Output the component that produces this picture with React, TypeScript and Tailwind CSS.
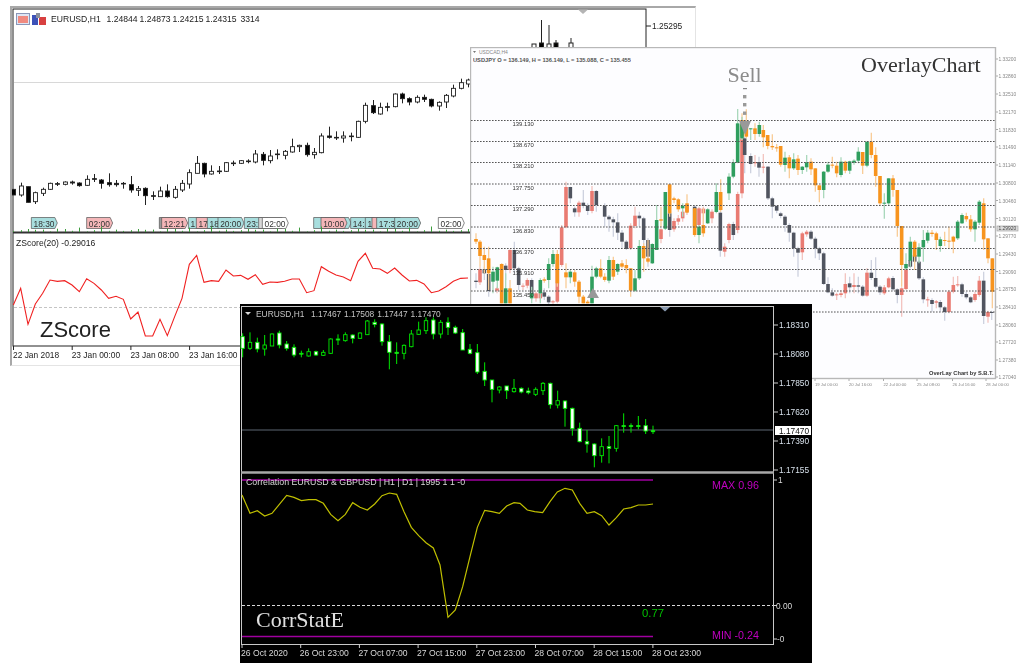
import React from "react";

type Tag = [number, string, string];

const sans = "font-['Liberation_Sans',Arial,sans-serif]";
const serif = "font-['Liberation_Serif','Times_New_Roman',serif]";

// zoom units = page px * 3, read straight off the chart
// [wickTop, wickBottom, bodyTop, bodyBottom, kind]  w = hollow, b = filled
const eurBlack: [number, number, number, number, string][] = [
  [568, 585, 568, 585, "b"], [548, 590, 558, 585, "w"], [560, 607, 560, 607, "b"], [575, 612, 578, 605, "w"],
  [563, 588, 568, 580, "w"], [548, 570, 550, 568, "w"], [546, 558, 551, 552, "b"], [544, 556, 546, 553, "w"],
  [542, 554, 546, 549, "b"], [547, 560, 549, 557, "b"], [526, 558, 538, 556, "w"], [522, 546, 536, 538, "b"],
  [537, 566, 540, 550, "b"], [520, 560, 548, 554, "b"], [540, 560, 550, 554, "b"], [546, 566, 550, 552, "b"],
  [528, 578, 554, 570, "b"], [558, 588, 566, 571, "w"], [562, 615, 565, 587, "b"], [574, 600, 587, 589, "b"],
  [560, 590, 573, 590, "w"], [553, 593, 573, 590, "b"], [558, 596, 568, 592, "w"], [540, 576, 550, 570, "w"],
  [508, 566, 518, 552, "w"], [468, 520, 490, 520, "w"], [488, 532, 490, 522, "b"], [496, 524, 514, 522, "w"],
  [498, 522, 513, 515, "b"], [486, 516, 488, 514, "w"], [482, 498, 489, 491, "b"], [480, 492, 482, 490, "w"],
  [478, 490, 483, 485, "b"], [450, 490, 462, 486, "w"], [456, 496, 463, 481, "b"], [450, 490, 468, 482, "w"],
  [448, 478, 462, 464, "b"], [450, 478, 454, 466, "w"], [416, 458, 440, 456, "w"], [434, 456, 436, 440, "w"],
  [428, 470, 436, 464, "b"], [444, 476, 457, 464, "w"], [400, 460, 408, 458, "w"], [380, 416, 408, 412, "b"],
  [394, 420, 412, 414, "b"], [394, 428, 408, 414, "w"], [398, 424, 408, 410, "b"], [362, 414, 364, 412, "w"],
  [308, 370, 316, 364, "w"], [300, 342, 317, 338, "b"], [308, 344, 322, 342, "w"], [308, 334, 320, 322, "b"],
  [280, 322, 282, 320, "w"], [278, 310, 282, 296, "b"], [292, 316, 296, 306, "b"], [286, 310, 292, 306, "w"],
  [284, 306, 292, 298, "b"], [296, 322, 298, 318, "b"], [304, 332, 307, 318, "w"], [282, 324, 286, 306, "w"],
  [254, 292, 265, 288, "w"], [236, 268, 248, 265, "w"], [236, 262, 240, 252, "w"],
];

const zscore = [
  285, 235, 343, 282, 250, 210, 214, 212, 225, 245, 206, 220, 240, 265, 259, 268, 327, 306, 378, 378, 328, 377, 320, 265,
  163, 136, 217, 212, 214, 180, 198, 196, 208, 194, 223, 216, 217, 214, 207, 207, 248, 242, 170, 184, 195, 201, 212, 154,
  130, 175, 177, 190, 174, 195, 213, 211, 222, 248, 243, 230, 214, 205, 204,
];

const tags: Tag[] = [
  [94, "#a8dede", "18:30"], [260, "#f4b6b8", "02:00"], [478, "#9a9a9a", ""], [485, "#f4b6b8", "12:21"], [565, "#a8dede", "1"],
  [589, "#f4b6b8", "17"], [622, "#a8dede", "18"], [654, "#a8dede", "20:00"], [733, "#a8dede", "23:"], [776, "#d8d8d8", ""],
  [787, "#ffffff", "02:00"], [941, "#a8dede", ""], [975, "#a8dede", ""], [963, "#f4b6b8", "10:00"], [1052, "#a8dede", "14:"],
  [1096, "#a8dede", "1"], [1116, "#f4b6b8", ""], [1130, "#a8dede", "17:3"], [1184, "#a8dede", "20:00"], [1315, "#ffffff", "02:00"],
];

// overlay chart: [x, bodyTop, bodyBottom, wickTop, wickBottom, kind]
type Bar = [number, number, number, number, number, string];
const overlayLeft: Bar[] = [
  [33, 722, 726, 700, 745, "d"], [45, 688, 727, 680, 735, "s"], [58, 688, 700, 680, 720, "d"], [71, 702, 753, 700, 770, "d"],
  [96, 745, 752, 740, 760, "s"], [122, 677, 690, 670, 720, "d"], [135, 630, 690, 628, 700, "s"], [148, 630, 685, 605, 700, "d"],
  [161, 685, 735, 680, 750, "d"], [174, 737, 740, 730, 750, "s"], [187, 720, 737, 715, 745, "s"], [200, 720, 762, 715, 780, "d"],
  [213, 760, 775, 755, 785, "s"], [226, 760, 775, 750, 785, "s"], [238, 757, 770, 745, 780, "d"], [251, 770, 787, 765, 795, "d"],
  [264, 784, 787, 780, 795, "s"], [277, 660, 785, 655, 790, "s"], [290, 562, 675, 555, 680, "s"], [303, 441, 562, 425, 565, "s"],
  [316, 441, 475, 440, 490, "d"], [329, 505, 517, 500, 530, "d"], [342, 488, 517, 482, 530, "s"], [355, 488, 498, 450, 505, "d"],
  [368, 497, 513, 490, 525, "d"], [381, 453, 513, 438, 520, "s"], [394, 453, 495, 450, 515, "d"], [419, 497, 530, 490, 560, "d"],
  [432, 530, 538, 525, 575, "d"], [445, 538, 547, 530, 590, "d"], [458, 547, 578, 520, 600, "d"], [471, 578, 605, 570, 625, "d"],
  [484, 605, 627, 600, 630, "d"], [497, 557, 625, 550, 630, "s"], [510, 527, 558, 500, 565, "s"], [523, 527, 535, 515, 560, "d"],
  [536, 535, 600, 530, 640, "d"], [549, 600, 650, 595, 680, "d"], [588, 568, 597, 565, 610, "s"], [614, 520, 570, 500, 590, "d"],
  [627, 543, 568, 535, 575, "s"], [640, 535, 545, 525, 555, "s"], [653, 515, 535, 510, 545, "s"], [666, 495, 515, 490, 525, "s"],
  [689, 500, 562, 495, 585, "d"], [702, 505, 555, 500, 570, "s"], [715, 506, 520, 500, 560, "s"], [741, 515, 535, 508, 550, "s"],
  [766, 518, 632, 505, 650, "d"], [779, 620, 635, 610, 650, "s"], [792, 552, 600, 548, 610, "s"], [805, 552, 585, 545, 600, "d"],
  [818, 462, 570, 455, 580, "s"], [831, 295, 460, 290, 475, "s"],
  [33, 597, 605, 580, 612, "o"], [45, 605, 648, 600, 680, "o"], [58, 645, 660, 620, 700, "o"], [71, 655, 700, 620, 750, "o"],
  [84, 695, 725, 680, 760, "g"], [97, 682, 722, 680, 745, "g"], [110, 672, 790, 670, 790, "o"], [122, 745, 790, 700, 790, "g"],
  [135, 745, 790, 720, 790, "o"], [200, 760, 775, 740, 790, "g"], [226, 720, 760, 715, 790, "g"], [238, 718, 722, 712, 728, "o"],
  [251, 672, 720, 655, 745, "g"], [264, 642, 672, 630, 680, "g"], [277, 642, 730, 630, 740, "o"], [303, 697, 712, 670, 745, "o"],
  [316, 695, 712, 690, 730, "g"], [329, 697, 725, 690, 740, "o"], [342, 725, 770, 720, 790, "o"], [355, 770, 790, 765, 790, "o"],
  [368, 785, 790, 780, 790, "o"], [381, 710, 790, 677, 790, "g"], [394, 685, 710, 680, 715, "g"], [407, 685, 710, 658, 715, "o"],
  [419, 710, 720, 700, 725, "o"], [432, 660, 722, 648, 730, "g"], [445, 660, 710, 650, 720, "o"], [458, 672, 695, 670, 705, "g"],
  [471, 670, 680, 660, 685, "o"], [484, 675, 685, 658, 700, "o"], [497, 685, 752, 685, 770, "o"], [510, 715, 752, 690, 755, "g"],
  [523, 618, 715, 600, 720, "g"], [536, 618, 655, 610, 695, "o"], [549, 655, 665, 600, 670, "o"], [562, 612, 670, 610, 672, "g"],
  [575, 540, 630, 495, 630, "g"], [588, 538, 542, 500, 560, "o"], [601, 456, 566, 456, 570, "g"], [614, 433, 520, 433, 530, "o"],
  [627, 475, 480, 470, 490, "o"], [640, 478, 508, 475, 515, "o"], [653, 497, 505, 490, 530, "g"], [666, 490, 518, 463, 520, "o"],
  [689, 505, 585, 505, 590, "o"], [702, 560, 585, 555, 610, "g"], [715, 555, 580, 505, 590, "o"], [728, 508, 550, 505, 552, "g"],
  [754, 456, 516, 430, 520, "g"], [767, 456, 510, 418, 515, "o"], [792, 410, 460, 400, 480, "g"], [805, 367, 410, 358, 415, "g"],
  [818, 250, 368, 207, 370, "g"], [831, 240, 290, 220, 300, "o"],
];

const overlayRight: Bar[] = [
  [14, 295, 345, 290, 400, "d"], [32, 348, 372, 340, 400, "d"], [45, 366, 370, 345, 380, "s"], [57, 366, 383, 350, 410, "d"], [70, 380, 383, 342, 400, "s"],
  [84, 380, 475, 378, 480, "d"], [97, 475, 500, 470, 535, "d"], [110, 498, 512, 495, 520, "d"], [122, 520, 528, 515, 535, "d"], [135, 530, 555, 525, 575, "d"],
  [148, 555, 578, 550, 605, "d"], [161, 578, 625, 575, 650, "d"], [174, 625, 638, 620, 710, "d"], [187, 580, 637, 575, 660, "s"], [200, 575, 583, 570, 590, "s"],
  [213, 575, 596, 570, 600, "d"], [226, 596, 625, 590, 655, "d"], [238, 625, 640, 620, 660, "d"], [251, 640, 732, 635, 735, "d"], [264, 732, 757, 712, 760, "d"],
  [277, 757, 767, 745, 770, "d"], [290, 763, 765, 758, 780, "s"], [303, 760, 765, 750, 772, "s"], [316, 732, 760, 700, 775, "s"], [329, 730, 742, 710, 760, "d"],
  [342, 735, 741, 700, 760, "s"], [355, 736, 740, 710, 760, "d"], [368, 740, 767, 735, 770, "d"], [381, 698, 767, 685, 770, "s"], [394, 698, 714, 660, 720, "d"],
  [407, 714, 740, 652, 745, "d"], [420, 740, 757, 735, 765, "d"], [433, 742, 760, 735, 765, "s"], [446, 715, 742, 710, 745, "s"], [459, 714, 748, 708, 752, "d"],
  [472, 748, 765, 745, 790, "d"], [485, 745, 765, 742, 830, "s"], [498, 688, 747, 680, 750, "s"], [511, 660, 680, 640, 685, "d"], [524, 645, 665, 640, 670, "d"],
  [537, 665, 715, 660, 720, "d"], [550, 718, 778, 712, 790, "d"], [563, 778, 780, 770, 800, "s"], [576, 780, 792, 775, 815, "d"], [589, 784, 788, 780, 805, "s"],
  [601, 786, 802, 780, 815, "d"], [614, 802, 816, 798, 842, "d"], [627, 755, 816, 750, 820, "s"], [640, 735, 755, 710, 760, "s"], [653, 733, 735, 708, 740, "s"],
  [666, 733, 762, 728, 770, "d"], [679, 762, 772, 755, 778, "d"], [692, 772, 787, 768, 790, "d"], [705, 762, 780, 755, 785, "s"], [718, 722, 765, 708, 770, "s"],
  [731, 722, 828, 695, 852, "d"], [744, 816, 830, 812, 848, "s"], [755, 816, 818, 812, 840, "d"],
  [6, 250, 295, 230, 300, "g"], [19, 245, 290, 208, 295, "o"], [32, 265, 268, 265, 300, "g"], [45, 265, 282, 250, 300, "o"], [58, 255, 282, 245, 290, "g"],
  [70, 270, 292, 255, 322, "o"], [83, 285, 318, 285, 328, "o"], [97, 318, 322, 283, 330, "o"], [110, 322, 324, 312, 335, "o"], [122, 318, 374, 318, 380, "o"],
  [135, 353, 375, 335, 395, "g"], [148, 352, 385, 345, 415, "o"], [161, 358, 385, 340, 390, "g"], [174, 356, 390, 345, 405, "o"], [187, 380, 390, 378, 402, "g"],
  [200, 367, 382, 345, 395, "g"], [213, 365, 388, 355, 405, "o"], [226, 385, 436, 385, 455, "o"], [238, 436, 450, 436, 487, "o"], [251, 395, 450, 393, 475, "g"],
  [264, 374, 395, 365, 398, "g"], [277, 374, 376, 350, 385, "o"], [290, 377, 400, 365, 412, "o"], [303, 365, 405, 352, 412, "g"], [316, 365, 392, 362, 400, "o"],
  [329, 364, 392, 362, 402, "g"], [342, 362, 368, 358, 374, "g"], [355, 335, 362, 322, 370, "g"], [368, 336, 377, 336, 402, "o"], [381, 305, 377, 305, 382, "g"],
  [394, 305, 345, 278, 355, "o"], [407, 345, 408, 322, 440, "o"], [420, 408, 490, 408, 495, "o"], [433, 488, 490, 460, 536, "g"], [446, 415, 490, 415, 495, "g"],
  [459, 415, 450, 405, 470, "o"], [472, 450, 558, 450, 590, "o"], [485, 558, 675, 558, 740, "o"], [498, 672, 685, 640, 690, "g"], [511, 605, 662, 590, 680, "g"],
  [524, 605, 650, 600, 690, "o"], [537, 622, 650, 610, 670, "g"], [550, 600, 622, 570, 665, "g"], [563, 578, 602, 570, 610, "g"], [576, 578, 582, 570, 590, "o"],
  [589, 580, 600, 575, 630, "o"], [601, 598, 618, 590, 635, "g"], [614, 600, 602, 575, 618, "o"], [627, 602, 604, 560, 625, "o"], [640, 590, 605, 587, 640, "o"],
  [653, 545, 595, 540, 600, "g"], [666, 525, 550, 520, 552, "g"], [679, 528, 538, 518, 545, "o"], [692, 538, 568, 525, 575, "o"], [705, 545, 568, 540, 605, "g"],
  [718, 485, 548, 480, 555, "g"], [731, 490, 598, 475, 630, "o"], [744, 595, 655, 595, 670, "o"], [757, 655, 755, 655, 805, "o"],
];

const barFill: Record<string, string> = { d: "#50545f", s: "#e97b72", g: "#2f9e5e", o: "#f7941e" };
const wickFill: Record<string, string> = { d: "#ced2df", s: "#f3c4bf", g: "#a9d8bb", o: "#f9cd97" };

const leftLevels = [120.5, 141.5, 162.5, 184, 205.5, 227, 248.5, 269.5, 291, 312];
const levelText = ["139.130", "138.670", "138.210", "137.750", "137.290", "136.830", "136.370", "135.910", "135.450"];
const overlayPrices: [number, string][] = [
  [59, "1.33200"], [76, "1.32860"], [94, "1.32510"], [112, "1.32170"], [129.5, "1.31830"], [147, "1.31490"], [165, "1.31140"],
  [183, "1.30800"], [200.5, "1.30460"], [218.5, "1.30120"], [236, "1.29770"], [254, "1.29430"], [271.5, "1.29090"], [289, "1.28750"],
  [307, "1.28410"], [325, "1.28060"], [342, "1.27720"], [360, "1.27380"], [377, "1.27040"],
];

// green candles, zoom units. [x, wickTop, wickBottom, bodyTop, bodyBottom, filled]
const greenBars: [number, number, number, number, number, number][] = [
  [14, 100, 172, 110, 145, 1], [36, 97, 150, 127, 145, 0], [58, 113, 157, 127, 147, 1], [80, 105, 167, 135, 147, 0], [102, 100, 138, 102, 138, 0],
  [124, 92, 145, 99, 135, 1], [146, 123, 152, 132, 145, 1], [168, 133, 172, 142, 165, 1], [190, 152, 172, 160, 162, 1], [212, 145, 170, 155, 168, 0],
  [234, 152, 168, 155, 165, 1], [256, 150, 168, 157, 166, 0], [278, 115, 162, 117, 160, 0], [300, 103, 135, 117, 120, 1], [322, 97, 125, 104, 122, 0],
  [344, 103, 130, 105, 115, 1], [366, 97, 117, 99, 115, 0], [388, 60, 104, 63, 104, 0], [410, 58, 82, 67, 73, 1], [432, 70, 137, 72, 125, 1],
  [454, 105, 208, 125, 157, 1], [476, 127, 192, 157, 160, 1], [498, 133, 178, 136, 160, 0], [520, 90, 142, 102, 140, 0], [542, 65, 105, 90, 103, 0],
  [564, 52, 102, 62, 92, 0], [586, 52, 118, 60, 102, 1], [608, 60, 115, 67, 102, 0], [630, 52, 105, 67, 82, 1], [652, 77, 102, 82, 99, 1],
  [674, 87, 150, 98, 150, 1], [696, 132, 163, 148, 160, 1], [718, 132, 222, 158, 216, 1], [740, 187, 258, 214, 240, 1], [762, 240, 307, 240, 268, 1],
  [784, 258, 280, 261, 270, 0], [806, 258, 297, 258, 272, 1], [828, 237, 278, 265, 275, 0], [850, 262, 280, 265, 276, 1], [871, 263, 283, 273, 278, 1],
  [893, 262, 288, 268, 283, 0], [915, 246, 285, 250, 272, 0], [937, 248, 326, 250, 314, 1], [959, 272, 325, 302, 315, 0], [981, 302, 380, 303, 325, 1],
  [1003, 323, 407, 325, 386, 1], [1025, 368, 427, 385, 425, 1], [1047, 390, 458, 425, 432, 1], [1069, 430, 502, 432, 467, 1], [1091, 415, 488, 440, 467, 0],
  [1113, 408, 490, 440, 445, 1], [1135, 375, 455, 377, 445, 0], [1157, 340, 398, 377, 379, 1], [1179, 370, 398, 377, 379, 1], [1201, 348, 388, 377, 379, 1],
  [1223, 357, 402, 377, 393, 1], [1245, 377, 402, 392, 395, 1],
];

const corr: [number, number][] = [
  [12, 75], [36, 130], [58, 122], [80, 138], [102, 130], [124, 103], [146, 76], [168, 82], [190, 92], [212, 89], [234, 89], [256, 100], [278, 133],
  [300, 152], [322, 133], [344, 98], [366, 112], [388, 120], [410, 102], [432, 77], [454, 69], [476, 73], [498, 125], [520, 172], [542, 197],
  [564, 218], [586, 234], [606, 285], [630, 442], [652, 420], [674, 350], [696, 260], [718, 172], [740, 121], [762, 125], [784, 130], [806, 108],
  [828, 98], [846, 100], [868, 120], [890, 125], [914, 128], [936, 95], [958, 66], [981, 55], [1003, 60], [1025, 100], [1047, 130], [1069, 125],
  [1091, 137], [1113, 165], [1135, 143], [1157, 117], [1179, 113], [1201, 105], [1223, 105], [1245, 102],
];

const corrAxis = ["26 Oct 2020", "26 Oct 23:00", "27 Oct 07:00", "27 Oct 15:00", "27 Oct 23:00", "28 Oct 07:00", "28 Oct 15:00", "28 Oct 23:00"];
const greenPrices: [number, string][] = [[325, "1.18310"], [354, "1.18080"], [383, "1.17850"], [412, "1.17620"], [441, "1.17390"], [470, "1.17155"]];

const ZScoreWindow = () => (
  <div className="absolute left-[10px] top-[6px] w-[686px] h-[360px] bg-white border-t-2 border-l-2 border-r border-b border-t-[#a8a8a8] border-l-[#a8a8a8] border-r-[#e4e4e4] border-b-[#e4e4e4]">
    <svg viewBox="12 8 684 357" width={684} height={357} className={`blur-[0.4px] ${sans}`}>
      <rect x="13" y="9" width="633" height="337" fill="none" stroke="#222" />
      <line x1="13" y1="232.5" x2="646" y2="232.5" stroke="#333" strokeWidth="2" />
      <line x1="14" y1="82.5" x2="646" y2="82.5" stroke="#d8d8d8" />
      <polygon points="578,9.5 588,9.5 583,14" fill="#b4b4b4" />
      <line x1="646" y1="26" x2="651" y2="26" stroke="#222" />
      <text x="652" y="29" fontSize="8.4" fill="#222">1.25295</text>

      <rect x="16.5" y="13.5" width="13" height="11" fill="#dfe6f4" stroke="#8a96b8" />
      <rect x="18" y="16" width="10" height="7" fill="#f08a80" />
      <rect x="32" y="15" width="6" height="10" fill="#3d52b8" />
      <rect x="39" y="17" width="7" height="8" fill="#d84040" />
      <rect x="36" y="13" width="4" height="5" fill="#8a8f9c" />
      <text y="22" fontSize="8.6" fill="#222">
        <tspan x="51">EURUSD,H1</tspan>
        <tspan x="106.5">1.24844</tspan>
        <tspan x="139.5">1.24873</tspan>
        <tspan x="172.5">1.24215</tspan>
        <tspan x="205.5">1.24315</tspan>
        <tspan x="240.5">3314</tspan>
      </text>

      {eurBlack.map(([wt, wb, bt, bb, kind], i) => {
        const x = Math.round((40 + i * 22) / 3) + 0.5;
        return (
          <g key={i}>
            <line x1={x} y1={wt / 3} x2={x} y2={wb / 3} stroke="#222" />
            <rect x={x - 2} y={bt / 3} width={4} height={Math.max((bb - bt) / 3, 0.6)} fill={kind === "b" ? "#000" : "#fff"} stroke="#222" strokeWidth="0.9" />
          </g>
        );
      })}
      {[[534, 44, 60], [541.5, 20, 60], [549, 25, 60], [556, 40, 60], [571, 38, 60]].map(([x, t, b], i) => (
        <g key={i}>
          <line x1={x} y1={t} x2={x} y2={b} stroke="#222" />
          <rect x={x - 2} y={i === 0 || i === 2 ? 44 : 43} width="4" height="10" fill={i === 1 || i === 3 ? "#000" : "#fff"} stroke="#222" />
        </g>
      ))}

      {tags.map(([x, color, label]) => {
        const l = x / 3;
        return (
          <g key={x}>
            <polygon points={`${l},217.5 ${l + 23.5},217.5 ${l + 26},223 ${l + 23.5},228.5 ${l},228.5`} fill={color} stroke="#555" strokeWidth="0.7" />
            <text x={l + 2.2} y="226.5" fontSize="8.4" fill="#333">{label}</text>
          </g>
        );
      })}
      {eurBlack.map((_, i) => {
        const x = Math.round((40 + i * 22) / 3) + 0.5;
        return <line key={i} x1={x} y1={232} x2={x} y2={232 - (1 + ((i * 7) % 5)) * (i % 3 === 0 ? 1.1 : 0.6)} stroke="#3c9c3c" />;
      })}

      <line x1="14" y1="307.5" x2="470" y2="307.5" stroke="#c4c4c4" strokeDasharray="3 2" />
      <polyline
        points={zscore.map((y, i) => `${(40 + i * 22) / 3},${210 + y / 3}`).join(" ")}
        fill="none"
        stroke="#f02020"
        strokeWidth="1.1"
      />
      <text x="16" y="246" fontSize="8.6" fill="#222">ZScore(20) -0.29016</text>
      <text x="40" y="337" fontSize="22" fill="#222">ZScore</text>
      {["22 Jan 2018", "23 Jan 00:00", "23 Jan 08:00", "23 Jan 16:00"].map((label, i) => (
        <g key={label}>
          <line x1={13.5 + i * 58.7} y1="346" x2={13.5 + i * 58.7} y2="350" stroke="#222" />
          <text x={13 + i * 58.7} y="357.5" fontSize="8.4" fill="#222">{label}</text>
        </g>
      ))}
    </svg>
  </div>
);

const Bars = ({ data, dx }: { data: Bar[]; dx: number }) => (
  <>
    {data.map(([x, t, b, wt, wb, k], i) => {
      const px = dx + x / 3;
      return (
        <g key={i}>
          <line x1={px} y1={40 + wt / 3} x2={px} y2={40 + wb / 3} stroke={wickFill[k]} strokeWidth="1.3" />
          <rect x={px - 1.8} y={40 + t / 3} width="3.6" height={Math.max((b - t) / 3, 1)} fill={barFill[k]} />
        </g>
      );
    })}
  </>
);

const OverlayWindow = () => (
  <div className="absolute left-[470px] top-[47px] w-[550px] h-[344px] bg-white">
    <svg viewBox="470 47 550 344" width={550} height={344} className={`blur-[0.4px] ${sans}`}>
      <rect x="470.5" y="47.5" width="525" height="331" fill="#fdfdff" stroke="#b8b8b8" strokeWidth="1.4" />
      <polygon points="473,51 476,51 474.5,53" fill="#777" />
      <text x="479" y="53.5" fontSize="5" fill="#888">USDCAD,H4</text>
      <text x="473" y="62" fontSize="5.7" fill="#333" fontWeight="bold" opacity="0.85">USDJPY O = 136.149, H = 136.149, L = 135.088, C = 135.455</text>

      <Bars data={overlayLeft} dx={465} />
      <Bars data={overlayRight} dx={740} />

      {leftLevels.map((y) => (
        <line key={y} x1="471" y1={y} x2="996" y2={y} stroke="#555" strokeDasharray="1.6 1.4" />
      ))}
      {levelText.map((label, i) => (
        <text key={label} x="512.5" y={leftLevels[i] + 5.5} fontSize="5.9" fill="#333">{label}</text>
      ))}

      <text x="727.5" y="82" fontSize="22" fill="#8c8c8c" className={serif}>Sell</text>
      <rect x="743" y="88" width="4" height="1.2" fill="#888" />
      {[95, 103, 111.5].map((y) => (
        <rect key={y} x="743" y={y} width="3.4" height="3.4" fill="#999" />
      ))}
      <polygon points="739,121 751,121 745,135" fill="#999" />
      <polygon points="593,288 599,298 587,298" fill="#999" />
      <text x="861" y="72" fontSize="22" fill="#333" className={serif}>OverlayChart</text>
      <text x="929" y="375" fontSize="5.7" fill="#333" fontWeight="bold">OverLay Chart by S.B.T.</text>

      {overlayPrices.map(([y, label]) => (
        <g key={label}>
          <line x1="996" y1={y} x2="998" y2={y} stroke="#aaa" />
          <text x="998.5" y={y + 2} fontSize="4.9" fill="#888">{label}</text>
        </g>
      ))}
      <rect x="997" y="226" width="21" height="5" fill="#ddd" stroke="#999" strokeWidth="0.6" />
      <text x="998.5" y="230.3" fontSize="4.9" fill="#444">1.29920</text>
      {[["19 Jul 00:00", 815], ["20 Jul 16:00", 849], ["22 Jul 00:00", 883.5], ["25 Jul 08:00", 917], ["26 Jul 16:00", 952.5], ["28 Jul 00:00", 986]].map(([label, x]) => (
        <g key={label}>
          <line x1={x} y1="379" x2={x} y2="381" stroke="#aaa" />
          <text x={x} y="386" fontSize="4.2" fill="#888">{label}</text>
        </g>
      ))}
    </svg>
  </div>
);

const CorrWindow = () => (
  <div className="absolute left-[240px] top-[304px] w-[572px] h-[359px] bg-black">
    <svg viewBox="240 304 572 359" width={572} height={359} className={`blur-[0.4px] ${sans}`}>
      <rect x="241.5" y="306.5" width="532" height="338" fill="none" stroke="#c8c8c8" />
      <line x1="242" y1="430" x2="773" y2="430" stroke="#5c6672" />
      <line x1="241" y1="472.5" x2="774" y2="472.5" stroke="#a8a8a8" strokeWidth="2.4" />
      <polygon points="660,307 670,307 665,311.5" fill="#8a9ab0" />
      <polygon points="245,312 251,312 248,315" fill="#d8d8d8" />
      <text y="317" fontSize="8.4" fill="#c4c4c4">
        <tspan x="256">EURUSD,H1</tspan>
        <tspan x="311">1.17467</tspan>
        <tspan x="344">1.17508</tspan>
        <tspan x="377.3">1.17447</tspan>
        <tspan x="410.5">1.17470</tspan>
      </text>

      {greenBars.map(([x, wt, wb, bt, bb, filled]) => {
        const px = 238 + x / 3;
        return (
          <g key={x}>
            <line x1={px} y1={300 + wt / 3} x2={px} y2={300 + wb / 3} stroke="#00e800" />
            <rect x={px - 1.7} y={300 + bt / 3} width="3.4" height={Math.max((bb - bt) / 3, 0.8)} fill={filled ? "#fff" : "#000"} stroke="#00e800" strokeWidth="0.9" />
          </g>
        );
      })}

      {greenPrices.map(([y, label]) => (
        <g key={label}>
          <line x1="774" y1={y} x2="778" y2={y} stroke="#d0d0d0" />
          <text x="779" y={y + 3} fontSize="8.3" fill="#d6e0ea">{label}</text>
        </g>
      ))}
      <rect x="775" y="426" width="36" height="9" fill="#fff" />
      <text x="779" y="433.5" fontSize="8.3" fill="#111">1.17470</text>

      <line x1="242" y1="480" x2="653" y2="480" stroke="#a000a0" strokeWidth="1.6" />
      <line x1="242" y1="636.5" x2="653" y2="636.5" stroke="#a000a0" strokeWidth="1.6" />
      <line x1="242" y1="605.5" x2="773" y2="605.5" stroke="#d8d8d8" strokeDasharray="3 2" />
      <polyline points={corr.map(([x, y]) => `${238 + x / 3},${470 + y / 3}`).join(" ")} fill="none" stroke="#c0c000" strokeWidth="1.2" />
      <text x="246" y="485" fontSize="8.8" fill="#d8d8d8">Correlation EURUSD &amp; GBPUSD | H1 | D1 | 1995 1 1 -0</text>
      <text x="256" y="627" fontSize="22" fill="#e0e0e0" className={serif}>CorrStatE</text>
      <text x="712" y="489" fontSize="10.7" fill="#c000c0">MAX 0.96</text>
      <text x="712" y="638.5" fontSize="10.7" fill="#c000c0">MIN -0.24</text>
      <text x="642" y="617" fontSize="11.3" fill="#00c000">0.77</text>

      <line x1="774" y1="480" x2="777" y2="480" stroke="#d0d0d0" />
      <text x="778" y="483" fontSize="8.3" fill="#d8d8d8">1</text>
      <line x1="774" y1="605.5" x2="777" y2="605.5" stroke="#d0d0d0" />
      <text x="776" y="608.5" fontSize="8.3" fill="#d8d8d8">0.00</text>
      <line x1="774" y1="639" x2="777" y2="639" stroke="#d0d0d0" />
      <text x="777" y="642" fontSize="8.3" fill="#d8d8d8">-0</text>

      {corrAxis.map((label, i) => (
        <g key={label}>
          <line x1={242 + i * 58.7} y1="644" x2={242 + i * 58.7} y2="648" stroke="#d0d0d0" />
          <text x={241 + i * 58.7} y="656" fontSize="8.6" fill="#d8d8d8">{label}</text>
        </g>
      ))}
    </svg>
  </div>
);

export default function App() {
  return (
    <div className="relative w-[1024px] h-[672px] overflow-hidden bg-white">
      <ZScoreWindow />
      <OverlayWindow />
      <CorrWindow />
    </div>
  );
}
